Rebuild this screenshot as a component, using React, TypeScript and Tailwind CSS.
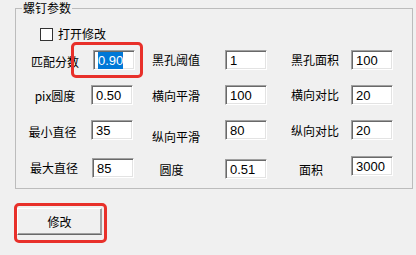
import clsx from 'clsx'

const cjk = "font-['Noto_Sans_CJK_SC','Noto_Sans',sans-serif]"

function Field({ value, selected, className }: { value: string; selected?: boolean; className?: string }) {
  return (
    <div
      className={clsx(
        "flex h-[20px] w-[42px] items-center border border-b-white border-l-[#a0a0a0] border-r-white border-t-[#a0a0a0] bg-white pl-[4px] font-['Liberation_Sans',Arial,sans-serif] text-[13px] leading-none text-black shadow-[inset_1px_1px_0_#696969,inset_-1px_-1px_0_#e3e3e3]",
        className,
      )}
    >
      {selected ? <span className="bg-[#0078d7] py-[2px] text-white">{value}</span> : value}
    </div>
  )
}

function Label({ text, className }: { text: string; className?: string }) {
  return <div className={clsx('text-center text-[12px] leading-[16px] text-black', className)}>{text}</div>
}

const grid = 'ml-[10px] grid h-[20px] grid-cols-[65px_42px_92px_42px_84px_42px] items-center'

export default function App() {
  return (
    <div className={clsx('relative h-[255px] w-[416px] overflow-hidden bg-[#f0f0f0]', cjk)}>
      <fieldset className="ml-[15px] w-[398px] border border-[#bcbcbc] pb-[10px]">
        <legend className="ml-[6px] px-[1px] text-[12px] leading-[16px] text-black">螺钉参数</legend>

        <div className="ml-[24px] mt-[10px] flex h-[16px] items-center gap-[5px]">
          <span className="h-[13px] w-[13px] border border-[#333] bg-white" />
          <span className="text-[12px] leading-[16px] text-black">打开修改</span>
        </div>

        <div className={clsx(grid, 'mt-[8px]')}>
          <Label text="匹配分数" className="translate-y-[2px] pr-[7px]" />
          <Field value="0.90" selected className="ml-[2px] w-[40px]" />
          <Label text="黑孔阈值" className="pr-[6px]" />
          <Field value="1" />
          <Label text="黑孔面积" className="pl-[12px]" />
          <Field value="100" />
        </div>

        <div className={clsx(grid, 'mt-[15px]')}>
          <Label text="pix圆度" className="translate-y-[1px] pr-[7px]" />
          <Field value="0.50" />
          <Label text="横向平滑" className="translate-y-[1px] pr-[6px]" />
          <Field value="100" />
          <Label text="横向对比" className="pl-[12px]" />
          <Field value="20" />
        </div>

        <div className={clsx(grid, 'mt-[15px]')}>
          <Label text="最小直径" className="translate-y-[2px] pr-[12px]" />
          <Field value="35" />
          <Label text="纵向平滑" className="translate-y-[7px] pr-[6px]" />
          <Field value="80" />
          <Label text="纵向对比" className="translate-y-[1px] pl-[12px]" />
          <Field value="20" />
        </div>

        <div className={clsx(grid, 'mt-[18px]')}>
          <Label text="最大直径" className="pr-[9px]" />
          <Field value="85" className="ml-[1px]" />
          <Label text="圆度" className="translate-y-[2px] pr-[15px]" />
          <Field value="0.51" className="translate-y-[1px]" />
          <Label text="面积" className="translate-y-[2px] pl-[4px]" />
          <Field value="3000" className="-translate-y-[2px]" />
        </div>
      </fieldset>

      <button
        type="button"
        className="ml-[17px] mt-[19px] flex h-[27px] w-[85px] items-center justify-center border border-b-[#696969] border-l-white border-r-[#a0a0a0] border-t-white bg-[#f0f0f0] text-[12px] leading-none text-black shadow-[inset_-1px_-1px_0_#a0a0a0]"
      >
        修改
      </button>

      <div className="absolute left-[71px] top-[42px] h-[36px] w-[72px] rounded-[5px] border-[3px] border-[#e8302a]" />
      <div className="absolute left-[14px] top-[203px] h-[40px] w-[93px] rounded-[5px] border-[3px] border-[#e8302a]" />
    </div>
  )
}
